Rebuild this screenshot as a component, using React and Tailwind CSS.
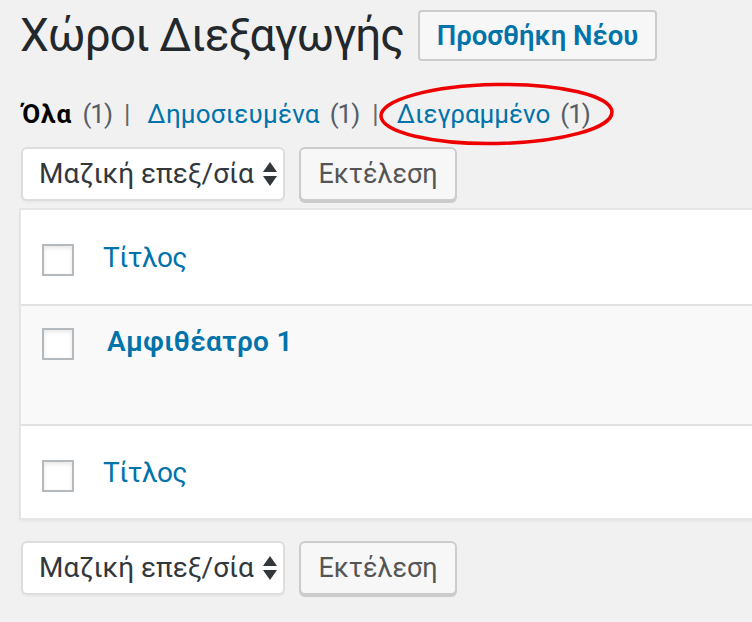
import React from "react";

const font = { fontFamily: "Roboto, 'Noto Sans', sans-serif" };

const Checkbox = ({ className = "" }) => (
  <span
    className={`block h-[32px] w-[32px] shrink-0 border-2 border-[#b4b9be] bg-white shadow-[inset_0_2px_4px_rgba(0,0,0,0.1)] ${className}`}
  />
);

const BulkActions = ({ className = "" }) => (
  <div className={`flex items-start gap-[14px] ${className}`}>
    <div className="ml-px flex h-[54px] w-[264px] items-center justify-between rounded-[6px] border-2 border-[#dddddd] bg-white pl-[16px] pr-[6px] shadow-[0_2px_2px_rgba(0,0,0,0.04)]">
      <span className="text-[28px] leading-[32px] text-[#32373c]">Μαζική επεξ/σία</span>
      <svg width="14" height="24" viewBox="0 0 14 24" className="text-[#32373c]">
        <path d="M0 10 L7 0 L14 10 Z" fill="currentColor" />
        <path d="M0 14 L14 14 L7 24 Z" fill="currentColor" />
      </svg>
    </div>
    <button className="h-[54px] w-[158px] rounded-[6px] border-2 border-[#cccccc] bg-[#f7f7f7] text-[27px] leading-[32px] text-[#555555] shadow-[0_2px_0_#cccccc]">
      Εκτέλεση
    </button>
  </div>
);

const Count = () => (
  <span className="ml-[10px] tracking-[-1px] text-[#555d66]">(1)</span>
);

const Sep = ({ className = "" }) => (
  <span className={`text-[#666666] ${className}`}>|</span>
);

const App = () => {
  return (
    <div
      className="h-[622px] w-[752px] overflow-hidden bg-[#f1f1f1] pl-[20px]"
      style={font}
    >
      <div className="flex items-start">
        <h1 className="mt-[12px] w-[398px] shrink-0 text-[46px] font-normal leading-[46px] tracking-[-1px] text-[#23282d]">
          Χώροι Διεξαγωγής
        </h1>
        <button className="mt-[10px] h-[51px] w-[239px] rounded-[4px] border-2 border-[#cccccc] bg-[#f7f7f7] text-[27.5px] font-semibold leading-[30px] text-[#0073aa]">
          Προσθήκη Νέου
        </button>
      </div>

      <ul className="mt-[40px] flex items-center text-[26px] leading-[26px]">
        <li className="ml-[2px]">
          <span className="font-bold tracking-[1.2px] text-black">Όλα</span>
          <Count />
          <Sep className="ml-[12px] mr-[17px]" />
        </li>
        <li>
          <span className="tracking-[0.2px] text-[#0073aa]">Δημοσιευμένα</span>
          <Count />
          <Sep className="ml-[13px] mr-[18px]" />
        </li>
        <li className="relative">
          <span className="text-[#0073aa]">Διεγραμμένο</span>
          <Count />
          <svg
            width="237"
            height="66"
            viewBox="0 0 237 66"
            className="absolute -left-[19px] -top-[20px]"
          >
            <ellipse
              cx="118.5"
              cy="33"
              rx="115.5"
              ry="29.5"
              fill="none"
              stroke="#ee0000"
              strokeWidth="3.5"
              transform="rotate(-1 118.5 33)"
            />
          </svg>
        </li>
      </ul>

      <BulkActions className="mt-[20px]" />

      <div className="-ml-px mt-[7px] w-[760px] border-2 border-[#e5e5e5] bg-white shadow-[0_2px_2px_rgba(0,0,0,0.04)]">
        <div className="flex h-[96px] items-start border-b-2 border-[#e1e1e1] bg-white">
          <Checkbox className="ml-[21px] mt-[34px]" />
          <span className="ml-[29px] mt-[32px] text-[28px] leading-[32px] tracking-[-0.5px] text-[#0073aa]">
            Τίτλος
          </span>
        </div>
        <div className="flex h-[120px] items-start border-b-2 border-[#e1e1e1] bg-[#f9f9f9]">
          <Checkbox className="ml-[21px] mt-[22px]" />
          <span className="ml-[33px] mt-[20px] text-[28px] font-semibold leading-[32px] tracking-[0.3px] text-[#0073aa]">
            Αμφιθέατρο 1
          </span>
        </div>
        <div className="flex h-[92px] items-start bg-white">
          <Checkbox className="ml-[21px] mt-[34px]" />
          <span className="ml-[29px] mt-[31px] text-[28px] leading-[32px] tracking-[-0.5px] text-[#0073aa]">
            Τίτλος
          </span>
        </div>
      </div>

      <BulkActions className="mt-[21px]" />
    </div>
  );
};

export default App;
